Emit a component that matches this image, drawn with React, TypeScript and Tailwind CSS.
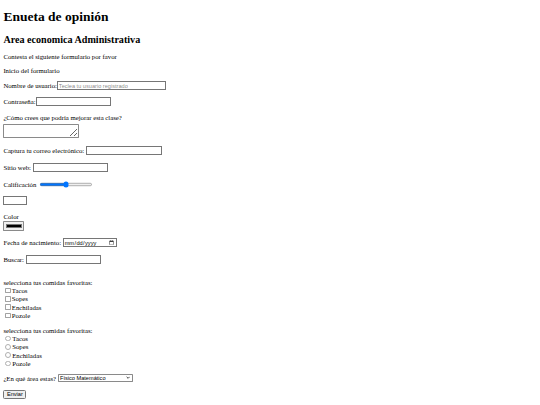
import React from "react";

const ctl = "[all:revert] [font-family:'Liberation_Sans',sans-serif]! [font-size:13.333px]!";
const box = "[all:revert]";

export default function App() {
  const foods = ["Tacos", "Sopes", "Enchiladas", "Pozole"];
  return (
    <div className="[zoom:0.421875] w-[1280px] min-h-[960px] px-[8px] pb-[8px] font-['Liberation_Serif',serif] text-[16px] leading-[normal] text-black bg-white">
      <h1 className="text-[32px] font-bold my-[21.44px]">Enueta de opinión</h1>
      <h2 className="text-[24px] font-bold my-[19.92px]">Area economica Administrativa</h2>
      <p className="my-[16px]">Contesta el siguiente formulario por favor</p>
      <p className="mt-[16px] mb-0">Inicio del formulario</p>
      <form onSubmit={(e) => e.preventDefault()} className="flex flex-col">
        <div className="flex items-center h-[24px] mt-[15px]">
          <span>Nombre de usuario:</span>
          <input type="text" size={30} placeholder="Teclea tu usuario registrado" className={ctl} />
        </div>
        <div className="flex items-center h-[24px] mt-[14px]">
          <span>Contraseña:</span>
          <input type="password" className={ctl} />
        </div>
        <div className="flex items-center h-[18px] mt-[17px]">
          <span>¿Cómo crees que podría mejorar esta clase?</span>
        </div>
        <div className="flex mt-[5px]">
          <textarea className="w-[180px] h-[34px] border border-[#8a8a8a] rounded-[2px] bg-white resize font-['Liberation_Mono',monospace] text-[13.333px] px-[2px] py-[2px]"></textarea>
        </div>
        <div className="flex items-center h-[24px] mt-[18px]">
          <span>Captura tu correo electrónico:</span>
          <input type="email" className={`${ctl} ml-[4px]!`} />
        </div>
        <div className="flex items-center h-[24px] mt-[16px]">
          <span>Sitio web:</span>
          <input type="url" className={`${ctl} ml-[4px]!`} />
        </div>
        <div className="flex items-center h-[24px] mt-[16px]">
          <span>Calificación</span>
          <input type="range" min={0} max={100} defaultValue={50} className={`${box} ml-[6px]!`} />
        </div>
        <div className="flex items-center h-[24px] mt-[14px]">
          <input type="number" min={0} max={10} className={ctl} />
        </div>
        <div className="flex items-center h-[18px] mt-[17px]">
          <span>Color</span>
        </div>
        <div className="flex mt-[3px]">
          <div className="flex w-[50px] h-[22px] border border-[#8a8a8a] rounded-[2px] bg-[#efefef] px-[4px] py-[3px]">
            <div className="flex-1 bg-black border border-[#777777]"></div>
          </div>
        </div>
        <div className="flex items-center h-[24px] mt-[16px]">
          <span>Fecha de nacimiento:</span>
          <input type="date" className={`${ctl} ml-[4px]!`} />
        </div>
        <div className="flex items-center h-[24px] mt-[16px]">
          <span>Buscar:</span>
          <input type="search" className={`${ctl} ml-[4px]!`} />
        </div>
        <div className="flex items-center h-[18px] mt-[34px]">
          <span>selecciona tus comidas favoritas:</span>
        </div>
        {foods.map((f) => (
          <label key={f} className="flex items-center h-[19.7px]">
            <input
              type="checkbox"
              className="appearance-none w-[13px] h-[13px] ml-[4px] mr-[3px] border border-[#a3a3a3] rounded-[2px] bg-white shrink-0"
            />
            <span>{f}</span>
          </label>
        ))}
        <div className="flex items-center h-[18px] mt-[17px]">
          <span>selecciona tus comidas favoritas:</span>
        </div>
        {foods.map((f) => (
          <label key={f} className="flex items-center h-[19.7px]">
            <input
              type="radio"
              name="comida"
              className="appearance-none w-[13px] h-[13px] ml-[5px] mr-[3px] border border-[#b0b0b0] rounded-full bg-white shrink-0"
            />
            <span>{f}</span>
          </label>
        ))}
        <div className="flex items-center h-[24px] mt-[13px]">
          <span>¿En qué área estas?</span>
          <div className="relative ml-[4px] flex">
            <select
              defaultValue="fm"
              className="appearance-none w-[178px] h-[20px] border border-[#8a8a8a] rounded-[2px] bg-white pl-[3px] pr-[20px] font-['Liberation_Sans',sans-serif] text-[13.333px] leading-[normal] text-black"
            >
              <option value="fm">Físico Matemático</option>
              <option value="ea">Económico Administrativo</option>
              <option value="qb">Químico Biológico</option>
              <option value="hs">Humanidades</option>
            </select>
            <svg className="absolute right-[6px] top-[6px] pointer-events-none" width="10" height="8" viewBox="0 0 10 8">
              <path d="M1.5 2 L5 5.5 L8.5 2" fill="none" stroke="#222" strokeWidth="2" />
            </svg>
          </div>
        </div>
        <div className="flex items-center h-[24px] mt-[14px]">
          <input type="submit" value="Enviar" className={ctl} />
        </div>
      </form>
    </div>
  );
}
